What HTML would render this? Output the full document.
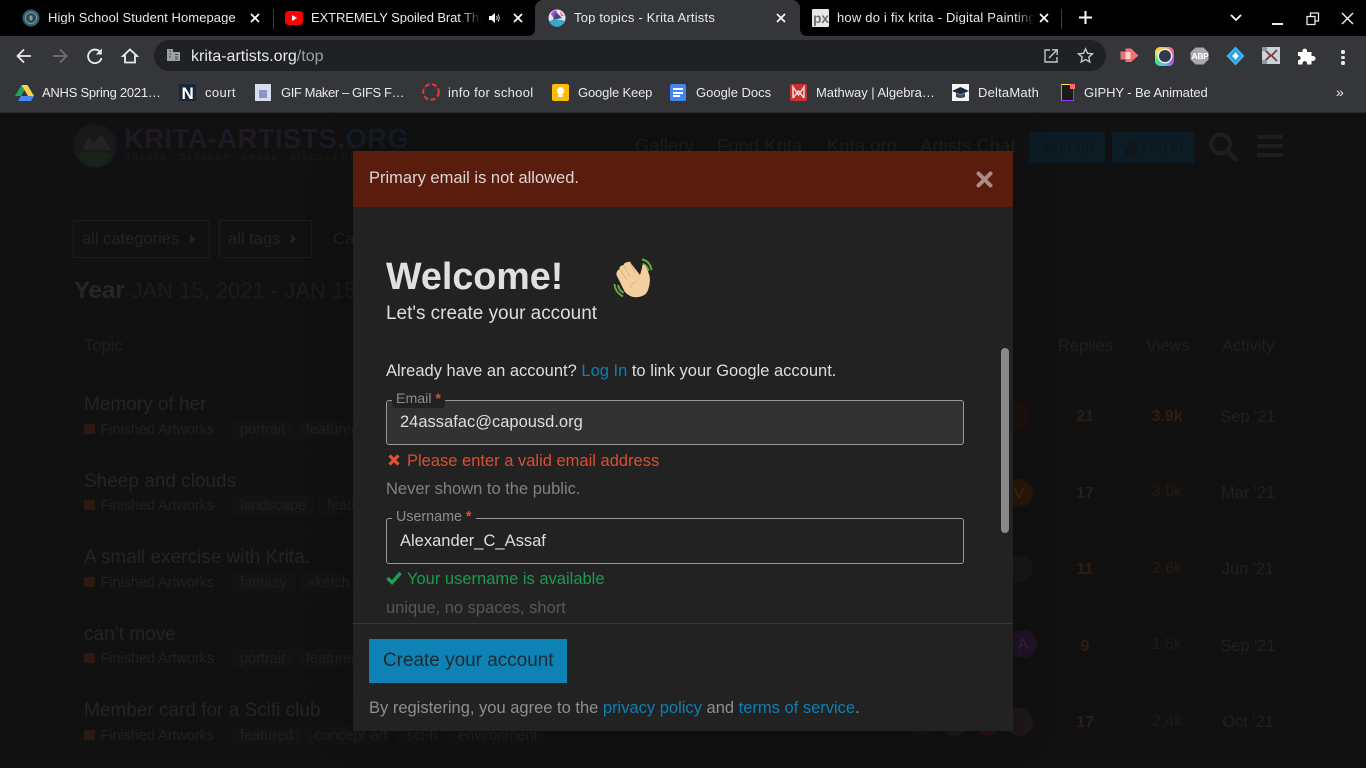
<!DOCTYPE html>
<html><head><meta charset="utf-8"><title>Top topics - Krita Artists</title>
<style>
html,body{margin:0;padding:0;width:1366px;height:768px;overflow:hidden;background:#111;font-family:"Liberation Sans",sans-serif}
.t{position:absolute;white-space:nowrap;line-height:1}
.b{position:absolute}
svg{position:absolute;overflow:visible}
.tab{font-size:13px;color:#e8eaed;top:10.5px;overflow:hidden}
.bm{font-size:13px;color:#e8eaed;top:86px}
.ti{font-size:19px;color:#242424;left:84px}
.cat{font-size:14.4px;color:#212121;left:100.5px}
.sq{position:absolute;left:84px;width:11px;height:10px;background:#2c1912}
.tag{font-size:14.5px;color:#202020}
.tb{position:absolute;height:19px;background:#131313}
.n{font-size:16px;font-weight:bold;color:#2f1d11;text-align:center;width:60px;left:1055px}
.v{font-size:16px;color:#261b13;text-align:center;width:60px;left:1137px}
.a{font-size:16.4px;color:#202020;text-align:center;width:80px;left:1208px}
.ln{position:absolute;left:73px;width:1220px;height:1px;background:#141414}
.av{position:absolute;border-radius:50%;width:28px;height:28px}
</style></head><body>

<!-- page behind -->
<div class="b" style="left:0;top:112px;width:1366px;height:656px;background:#111"></div>
<div class="b" style="left:0;top:112px;width:1366px;height:1px;background:#2a2a2a"></div>

<svg style="left:73px;top:124px" width="44" height="44" viewBox="0 0 44 44">
<circle cx="22" cy="22" r="21" fill="#191919" stroke="#181626" stroke-width="2"/>
<path d="M4 30Q22 24 40 30Q36 42 22 43Q8 42 4 30Z" fill="#182218"/>
<path d="M10 26L16 12L20 20L28 10L38 26Z" fill="#232323"/>
</svg>
<div class="t" style="left:124px;top:125px;font-size:27.6px;font-weight:bold;color:#1f1825;letter-spacing:.3px">KRITA-ARTISTS.<span style="color:#141c25">ORG</span></div>
<div class="t" style="left:125px;top:154px;font-size:8px;font-weight:bold;color:#1a1a1a;letter-spacing:1.75px">CREATE . DEVELOP . SHARE . DISCUSS KRITA</div>

<div class="t" style="left:635px;top:137px;font-size:18.5px;color:#1f1f1f">Gallery</div>
<div class="t" style="left:717px;top:137px;font-size:18.5px;color:#1f1f1f">Fund Krita</div>
<div class="t" style="left:827px;top:137px;font-size:18.5px;color:#1f1f1f">Krita.org</div>
<div class="t" style="left:920px;top:137px;font-size:18.5px;color:#1f1f1f">Artists Chat</div>
<div class="b" style="left:1029px;top:132px;width:76px;height:31px;background:#0c1c24"></div>
<div class="t" style="left:1042px;top:140px;font-size:14.5px;color:#0f1518">Sign Up</div>
<div class="b" style="left:1112px;top:132px;width:82px;height:31px;background:#0c1c24"></div>
<svg style="left:1125px;top:140px" width="13" height="15" viewBox="0 0 13 15"><circle cx="6.5" cy="4" r="3.8" fill="#0f1518"/><path d="M0 15V11Q0 8.300 3 8.300H10Q13 8.300 13 11V15Z" fill="#0f1518"/></svg>
<div class="t" style="left:1142.5px;top:140px;font-size:14.5px;color:#0f1518">Log In</div>
<svg style="left:1208px;top:132px" width="30" height="30" viewBox="0 0 30 30"><circle cx="12.500" cy="12" r="9.500" fill="none" stroke="#1e1e1e" stroke-width="4"/><path d="M19 19L27 27" stroke="#1e1e1e" stroke-width="5" stroke-linecap="round"/></svg>
<div class="b" style="left:1257px;top:135px;width:26px;height:4px;background:#1e1e1e"></div>
<div class="b" style="left:1257px;top:144px;width:26px;height:4px;background:#1e1e1e"></div>
<div class="b" style="left:1257px;top:153px;width:26px;height:4px;background:#1e1e1e"></div>

<div class="b" style="left:73px;top:220px;width:135px;height:36px;border:1px solid #1c1c1c"></div>
<div class="t" style="left:82px;top:231px;font-size:16.5px;color:#232323">all categories</div>
<svg style="left:190px;top:234px" width="6" height="10"><path d="M0 0L5 5L0 10Z" fill="#232323"/></svg>
<div class="b" style="left:219px;top:220px;width:91px;height:36px;border:1px solid #1c1c1c"></div>
<div class="t" style="left:228px;top:231px;font-size:16.5px;color:#232323">all tags</div>
<svg style="left:290.500px;top:234px" width="6" height="10"><path d="M0 0L5 5L0 10Z" fill="#232323"/></svg>
<div class="t" style="left:333px;top:230px;font-size:17px;color:#212121">Ca</div>
<div class="t" style="left:74px;top:279px;font-size:24px;font-weight:bold;color:#262626">Year</div>
<div class="t" style="left:131.500px;top:280px;font-size:22px;color:#1c1c1c">JAN 15, 2021 - JAN 15</div>
<div class="t" style="left:84px;top:338px;font-size:16.5px;color:#1f1f1f">Topic</div>
<div class="t" style="left:1058px;top:338px;font-size:16.5px;color:#1f1f1f">Replies</div>
<div class="t" style="left:1146px;top:338px;font-size:16.5px;color:#1f1f1f">Views</div>
<div class="t" style="left:1222px;top:338px;font-size:16.5px;color:#1f1f1f">Activity</div>

<div class="ln" style="top:453px"></div><div class="ln" style="top:530px"></div><div class="ln" style="top:607px"></div><div class="ln" style="top:684px"></div><div class="ln" style="top:760px"></div>

<div class="t ti" style="top:395px">Memory of her</div>
<div class="sq" style="top:424px"></div><div class="t cat" style="top:423px">Finished Artworks</div>
<div class="tb" style="left:232px;top:420px;width:62px"></div><div class="t tag" style="left:240px;top:423px">portrait</div>
<div class="tb" style="left:298px;top:420px;width:60px"></div><div class="t tag" style="left:306px;top:423px">featured</div>

<div class="t ti" style="top:472px">Sheep and clouds</div>
<div class="sq" style="top:500px"></div><div class="t cat" style="top:499px">Finished Artworks</div>
<div class="tb" style="left:232px;top:496px;width:83px"></div><div class="t tag" style="left:240px;top:499px">landscape</div>
<div class="tb" style="left:319px;top:496px;width:40px"></div><div class="t tag" style="left:327px;top:499px">featured</div>

<div class="t ti" style="top:548px">A small exercise with Krita.</div>
<div class="sq" style="top:577px"></div><div class="t cat" style="top:576px">Finished Artworks</div>
<div class="tb" style="left:232px;top:573px;width:64px"></div><div class="t tag" style="left:240px;top:576px">fantasy</div>
<div class="tb" style="left:300px;top:573px;width:58px"></div><div class="t tag" style="left:308px;top:576px">sketch</div>

<div class="t ti" style="top:625px">can’t move</div>
<div class="sq" style="top:653px"></div><div class="t cat" style="top:652px">Finished Artworks</div>
<div class="tb" style="left:232px;top:649px;width:62px"></div><div class="t tag" style="left:240px;top:652px">portrait</div>
<div class="tb" style="left:298px;top:649px;width:60px"></div><div class="t tag" style="left:306px;top:652px">featured</div>

<div class="t ti" style="top:701px">Member card for a Scifi club</div>
<div class="sq" style="top:730px"></div><div class="t cat" style="top:729px">Finished Artworks</div>
<div class="tb" style="left:232px;top:726px;width:70px"></div><div class="t tag" style="left:240px;top:729px">featured</div>
<div class="tb" style="left:306px;top:726px;width:83px"></div><div class="t tag" style="left:315px;top:729px">concept-art</div>
<div class="tb" style="left:396px;top:726px;width:44px"></div><div class="t tag" style="left:407px;top:729px">sci-fi</div>
<div class="tb" style="left:447px;top:726px;width:97px"></div><div class="t tag" style="left:458px;top:729px">environment</div>

<div class="av" style="left:1005px;top:403px;background:#1c120e;width:26px;height:26px"></div>
<div class="av" style="left:1005px;top:479px;background:#281709"></div>
<div class="t" style="left:1014px;top:486px;font-size:15px;color:#3a2a20">V</div>
<div class="av" style="left:1005px;top:555px;background:#171717"></div>
<div class="av" style="left:1009px;top:630px;background:#20132a"></div>
<div class="t" style="left:1018px;top:637px;font-size:15px;color:#33283a">A</div>
<div class="av" style="left:1005px;top:708px;background:#1e1818"></div>
<div class="av" style="left:910px;top:712px;background:#1a1410;width:24px;height:24px"></div>
<div class="av" style="left:942px;top:712px;background:#191919;width:24px;height:24px"></div>
<div class="av" style="left:974px;top:708px;background:#2a1014"></div>

<div class="t n" style="top:409px">21</div><div class="t v" style="top:409px;font-weight:bold;color:#2f1d11">3.9k</div><div class="t a" style="top:409px">Sep '21</div>
<div class="t n" style="top:486px">17</div><div class="t v" style="top:484px">3.0k</div><div class="t a" style="top:485px">Mar '21</div>
<div class="t n" style="top:562px">11</div><div class="t v" style="top:561px">2.6k</div><div class="t a" style="top:561px">Jun '21</div>
<div class="t n" style="top:639px">9</div><div class="t v" style="top:637px;color:#1c1c1c">1.5k</div><div class="t a" style="top:638px">Sep '21</div>
<div class="t n" style="top:715px">17</div><div class="t v" style="top:714px">2.4k</div><div class="t a" style="top:714px">Oct '21</div>

<!-- modal -->
<div class="b" style="left:353px;top:151px;width:660px;height:580px;background:#222;box-shadow:0 0 40px rgba(0,0,0,.25)"></div>
<div class="b" style="left:353px;top:151px;width:660px;height:56px;background:#5a1d0d"></div>
<div class="t" style="left:369px;top:170px;font-size:16.5px;color:#dcd6d4">Primary email is not allowed.</div>
<svg style="left:976px;top:171px" width="17" height="17" viewBox="0 0 17 17"><path d="M2.500 2.500L14.500 14.500M14.500 2.500L2.500 14.500" stroke="#ac8b85" stroke-width="4" stroke-linecap="round"/></svg>

<div class="t" style="left:386px;top:257.500px;font-size:37.700px;font-weight:bold;color:#e0e0e0">Welcome!</div>
<svg style="left:613px;top:258px" width="42" height="42" viewBox="0 0 42 42">
<g fill="none" stroke="#68a744" stroke-width="2">
<path d="M29 1.500Q37 3 38.500 12"/><path d="M29.500 6Q34 7 35.500 13"/>
<path d="M1.500 26Q2 34 10 38.500"/><path d="M5 27Q6 32 10.500 35"/>
</g>
<path d="M16.700 3.700Q11 4 10.500 7Q6 8 6.500 11Q3 13 3.500 17L11.700 33.700Q17 39.500 23.300 39.300Q33 38.500 35 32Q37.500 25 36.700 18.700Q35 12 31.700 7Q29 6 29 10L27 17Z" fill="#f3cfa0"/>
<g fill="none" stroke="#dfb285" stroke-width="1"><path d="M10.500 7L17 19"/><path d="M6.500 11L14 22"/><path d="M16.700 3.700L22 15"/><path d="M17 30Q19 24 24 24"/></g>
</svg>
<div class="t" style="left:386px;top:305px;font-size:18.950px;color:#dedede">Let's create your account</div>
<div class="t" style="left:386px;top:363px;font-size:16.500px;color:#dedede">Already have an account? <span style="color:#0d7fb0">Log In</span> to link your Google account.</div>

<div class="b" style="left:386px;top:400px;width:576px;height:43px;background:#323232;border:1px solid #999;border-radius:3px"></div>
<div class="b" style="left:392px;top:390px;width:53px;height:18px;background:#222;border-radius:3px"></div>
<div class="t" style="left:396px;top:392px;font-size:14.200px;color:#8c8c8c">Email <b style="color:#d9502f">*</b></div>
<div class="t" style="left:400px;top:413.500px;font-size:16.500px;color:#dedede">24assafac@capousd.org</div>
<svg style="left:388px;top:454px" width="12" height="12" viewBox="0 0 12 12"><path d="M1.500 1.500L10.500 10.500M10.500 1.500L1.500 10.500" stroke="#e0532f" stroke-width="3.200"/></svg>
<div class="t" style="left:407px;top:452.500px;font-size:16.500px;color:#d9502f">Please enter a valid email address</div>
<div class="t" style="left:386px;top:480.500px;font-size:16.500px;color:#808080">Never shown to the public.</div>

<div class="b" style="left:386px;top:518px;width:576px;height:44px;background:#222;border:1px solid #999;border-radius:3px"></div>
<div class="b" style="left:392px;top:508px;width:84px;height:18px;background:#222"></div>
<div class="t" style="left:396px;top:510px;font-size:14.300px;color:#8c8c8c">Username <b style="color:#d9502f">*</b></div>
<div class="t" style="left:400px;top:533px;font-size:16.500px;color:#dedede">Alexander_C_Assaf</div>
<svg style="left:386px;top:571px" width="16" height="14" viewBox="0 0 16 14"><path d="M1.500 7L6 11.500L14.500 2" stroke="#1e9e50" stroke-width="3.400" fill="none"/></svg>
<div class="t" style="left:407px;top:570.500px;font-size:16.500px;color:#1a9a4e">Your username is available</div>
<div class="t" style="left:386px;top:598.500px;font-size:16.500px;height:24px;color:#575757;overflow:hidden;line-height:18px">unique, no spaces, short</div>
<div class="b" style="left:1001px;top:348px;width:8px;height:185px;background:#8a8a8a;border-radius:4px"></div>

<div class="b" style="left:353px;top:623px;width:660px;height:108px;background:#222;border-top:1px solid #373737;box-sizing:border-box"></div>
<div class="b" style="left:369px;top:639px;width:198px;height:44px;background:#0e82b4"></div>
<div class="t" style="left:383px;top:651.500px;font-size:18.950px;color:#1d2a33">Create your account</div>
<div class="t" style="left:369px;top:699.500px;font-size:16.500px;color:#8f8f8f">By registering, you agree to the <span style="color:#0d7fb0">privacy policy</span> and <span style="color:#0d7fb0">terms of service</span>.</div>

<!-- chrome -->
<div class="b" style="left:0;top:0;width:1366px;height:36px;background:#000"></div>
<div class="b" style="left:0;top:36px;width:1366px;height:76px;background:#35363a"></div>
<div class="b" style="left:535px;top:0;width:265px;height:36px;background:#35363a;border-radius:8px 8px 0 0"></div>
<svg style="left:527px;top:28px" width="8" height="8"><path d="M0 8Q8 8 8 0V8Z" fill="#35363a"/></svg>
<svg style="left:800px;top:28px" width="8" height="8"><path d="M8 8Q0 8 0 0V8Z" fill="#35363a"/></svg>
<div class="b" style="left:273px;top:9px;width:1px;height:20px;background:#3c3c3c"></div>
<div class="b" style="left:1061px;top:9px;width:1px;height:20px;background:#3c3c3c"></div>

<svg style="left:22px;top:9px" width="18" height="18" viewBox="0 0 18 18"><circle cx="9" cy="9" r="8.500" fill="#2f5f73"/><circle cx="9" cy="9" r="5.500" fill="#27465e" stroke="#8ba088" stroke-width="1"/><rect x="7.500" y="6.500" width="3" height="5" fill="#8a9a88"/></svg>
<div class="t tab" style="left:48px;width:192px;letter-spacing:.07px">High School Student Homepage</div>
<svg style="left:250px;top:13px" width="10" height="10"><path d="M1 1L9 9M9 1L1 9" stroke="#fff" stroke-width="1.700"/></svg>

<svg style="left:285px;top:10px" width="18" height="17" viewBox="0 0 18 17"><rect y="1" width="18" height="14" rx="3.500" fill="#f00"/><path d="M7 5L12 8L7 11Z" fill="#fff"/></svg>
<div class="t tab" style="left:311px;width:170px;letter-spacing:-.1px">EXTREMELY Spoiled Brat Thi</div>
<div class="b" style="left:461px;top:8px;width:20px;height:20px;background:linear-gradient(90deg,rgba(0,0,0,0),#000)"></div>
<svg style="left:488px;top:12px" width="13" height="12" viewBox="0 0 13 12"><path d="M1 4H3.500L7 1V11L3.500 8H1Z" fill="#fff"/><path d="M8.500 4Q10 6 8.500 8M10 2.500Q12.500 6 10 9.500" stroke="#ddd" stroke-width="1" fill="none"/></svg>
<svg style="left:513px;top:13px" width="10" height="10"><path d="M1 1L9 9M9 1L1 9" stroke="#fff" stroke-width="1.700"/></svg>

<svg style="left:548px;top:9px" width="18" height="18" viewBox="0 0 18 18"><circle cx="9" cy="9" r="8.500" fill="#e6e0f4"/><path d="M1 12Q9 9 17 12Q14 18 9 18Q4 18 1 12Z" fill="#3aa6c9"/><path d="M3 5Q6 0 9 2L6 10Z" fill="#9a52c8"/><path d="M8 3L14 9L5 11Z" fill="#444a76"/><path d="M12 2L16 7L13 7Z" fill="#e76aa8"/></svg>
<div class="t tab" style="left:574px;width:200px;letter-spacing:.2px">Top topics - Krita Artists</div>
<svg style="left:776px;top:13px" width="10" height="10"><path d="M1 1L9 9M9 1L1 9" stroke="#fff" stroke-width="1.700"/></svg>

<div class="b" style="left:812px;top:9px;width:17px;height:18px;background:#e8e8e8;border-radius:1px"></div>
<div class="t" style="left:813px;top:11px;font-size:14px;font-weight:bold;color:#707070;letter-spacing:-.3px">px</div>
<div class="t tab" style="left:837px;width:197px;letter-spacing:.2px">how do i fix krita - Digital Painting</div>
<div class="b" style="left:1014px;top:8px;width:21px;height:20px;background:linear-gradient(90deg,rgba(0,0,0,0),#000)"></div>
<svg style="left:1039px;top:13px" width="10" height="10"><path d="M1 1L9 9M9 1L1 9" stroke="#fff" stroke-width="1.700"/></svg>
<svg style="left:1078px;top:10px" width="15" height="15"><path d="M7.500 1V14M1 7.500H14" stroke="#fff" stroke-width="2"/></svg>
<svg style="left:1230px;top:14px" width="12" height="8"><path d="M1 1L6 6L11 1" stroke="#fff" stroke-width="1.800" fill="none"/></svg>
<div class="b" style="left:1272px;top:23px;width:11px;height:2px;background:#e8eaed"></div>
<svg style="left:1306px;top:12px" width="14" height="14"><path d="M4.500 4V1H12.500V9H9.500M1 4.500H9V12.500H1Z" stroke="#e8eaed" stroke-width="1.300" fill="none"/></svg>
<svg style="left:1341px;top:12px" width="13" height="13"><path d="M1 1L12 12M12 1L1 12" stroke="#e8eaed" stroke-width="1.500"/></svg>

<!-- toolbar -->
<svg style="left:15px;top:47px" width="18" height="18" viewBox="0 0 18 18"><path d="M16 9H3M9 2.500L2.500 9L9 15.500" stroke="#e8eaed" stroke-width="1.800" fill="none"/></svg>
<svg style="left:51px;top:47px" width="18" height="18" viewBox="0 0 18 18"><path d="M2 9H15M9 2.500L15.500 9L9 15.500" stroke="#6f7073" stroke-width="1.800" fill="none"/></svg>
<svg style="left:86px;top:47px" width="18" height="18" viewBox="0 0 18 18"><path d="M14.500 5.500A6.800 6.800 0 1 0 15.500 11" stroke="#e8eaed" stroke-width="1.800" fill="none"/><path d="M15.800 1.500V7.500H9.800Z" fill="#e8eaed"/></svg>
<svg style="left:121px;top:47px" width="18" height="18" viewBox="0 0 18 18"><path d="M2 9L9 2.500L16 9H14V15.500H4V9Z" stroke="#e8eaed" stroke-width="1.800" fill="none" stroke-linejoin="miter"/></svg>

<div class="b" style="left:154px;top:40px;width:952px;height:31px;background:#202124;border-radius:16px"></div>
<svg style="left:166px;top:48px" width="15" height="14" viewBox="0 0 15 14"><path d="M1 1H7V4H14V13H1Z" fill="#9aa0a6"/><path d="M3 3H5M3 6H5M3 9H5M9 6.500H12M9 9H12M9 11H12" stroke="#4b4c4f" stroke-width="1"/></svg>
<div class="t" style="left:191px;top:49px;font-size:16px;color:#e8eaed">krita-artists.org<span style="color:#9aa0a6">/top</span></div>
<svg style="left:1043px;top:48px" width="16" height="16" viewBox="0 0 16 16"><path d="M7 2H2V14H14V9" stroke="#c4c7c9" stroke-width="1.400" fill="none"/><path d="M6 10L14 2M9 1.800H14.200V7" stroke="#c4c7c9" stroke-width="1.400" fill="none"/></svg>
<svg style="left:1077px;top:47px" width="17" height="17" viewBox="0 0 17 17"><path d="M8.500 1.800L10.500 6.300L15.500 6.800L11.800 10.100L12.800 15L8.500 12.500L4.200 15L5.200 10.100L1.500 6.800L6.500 6.300Z" stroke="#c4c7c9" stroke-width="1.400" fill="none"/></svg>

<svg style="left:1120px;top:47px" width="19" height="17" viewBox="0 0 19 17"><path d="M.5 4.500H5.500V1.500H11L18.500 8.500L11 15H5.500V12.500H.5Z" fill="#ef7272"/><rect x="5.500" y="5" width="5" height="7" fill="#ffd0d0"/></svg>
<div class="b" style="left:1155px;top:46.500px;width:19px;height:19px;border-radius:5px;background:conic-gradient(#f5b53d,#ef5da8,#b44fd8,#4fc3f7,#4be08a,#f5e14d,#f5b53d)"></div>
<div class="b" style="left:1158.500px;top:50px;width:12px;height:12px;border-radius:50%;background:#2f3a4a;box-shadow:0 0 0 1.500px #e8eef5"></div>
<svg style="left:1190px;top:47px" width="19" height="18" viewBox="0 0 19 18"><path d="M5.500 .5H13.500L18.500 5.500V12.500L13.500 17.500H5.500L.5 12.500V5.500Z" fill="#a9a9a9"/></svg>
<div class="t" style="left:1191.500px;top:52px;font-size:8.500px;font-weight:bold;color:#fff;letter-spacing:-.3px">ABP</div>
<svg style="left:1226px;top:46px" width="19" height="20" viewBox="0 0 19 20"><path d="M9.500 .5L18.500 10L9.500 19.500L.5 10Z" fill="#39b4f0"/><path d="M9.500 4L15 10L9.500 16L4 10Z" fill="#1c86c9"/><path d="M9.500 5.500L13.500 10L9.500 14.500L5.500 10Z" fill="#9fe2ff"/><circle cx="9.500" cy="10" r="1.800" fill="#fff"/></svg>
<div class="b" style="left:1262px;top:47px;width:18px;height:17px;background:#c9d2d6"></div>
<svg style="left:1262px;top:47px" width="18" height="17"><path d="M3 3L8.500 8.500L3 14M15 3L9.500 8.500L15 14" stroke="#7a3a3a" stroke-width="1.800" fill="none"/><path d="M0 0H5V4H0ZM0 13H5V17H0Z" fill="#8a9aa0"/></svg>
<svg style="left:1297px;top:47px" width="18" height="18" viewBox="0 0 18 18"><path d="M1 5H5.500V3.500A2.300 2.300 0 0 1 10 3.500V5H14.500V9H16A2.300 2.300 0 0 1 16 14H14.500V17.500H10V16A2.300 2.300 0 0 0 5.500 16V17.500H1V13H2.500A2.300 2.300 0 0 0 2.500 9H1Z" fill="#fff"/></svg>
<div class="b" style="left:1341px;top:50px;width:3.500px;height:3.500px;border-radius:50%;background:#e8eaed"></div>
<div class="b" style="left:1341px;top:55.500px;width:3.500px;height:3.500px;border-radius:50%;background:#e8eaed"></div>
<div class="b" style="left:1341px;top:61px;width:3.500px;height:3.500px;border-radius:50%;background:#e8eaed"></div>

<!-- bookmarks -->
<svg style="left:15px;top:84px" width="19" height="17" viewBox="0 0 19 17"><path d="M6.500 1H12.500L6 12H0Z" fill="#1fa463"/><path d="M12.500 1L19 12H13L6.500 1Z" fill="#ffd04b"/><path d="M3 17L6 12H19L16 17Z" fill="#4688f4"/></svg>
<div class="t bm" style="left:42px;letter-spacing:-.25px">ANHS Spring 2021…</div>
<div class="b" style="left:179px;top:84px;width:17px;height:17px;background:#17283c"></div>
<div class="t" style="left:181.500px;top:84.500px;font-size:17px;font-weight:bold;color:#fff">N</div>
<div class="t bm" style="left:205px;letter-spacing:.4px">court</div>
<div class="b" style="left:255px;top:84px;width:16px;height:17px;background:#d9dcec"></div>
<div class="b" style="left:259px;top:90px;width:8px;height:8px;background:#8f93c8"></div>
<div class="t bm" style="left:281px;letter-spacing:-.4px">GIF Maker – GIFS F…</div>
<svg style="left:422px;top:83px" width="18" height="18"><circle cx="9" cy="9" r="7.800" fill="none" stroke="#e03a3a" stroke-width="2" stroke-dasharray="5 2.500"/></svg>
<div class="t bm" style="left:448px;letter-spacing:.3px">info for school</div>
<div class="b" style="left:552px;top:84px;width:17px;height:17px;background:#fbbc05;border-radius:2px"></div>
<div class="b" style="left:557px;top:87px;width:7px;height:8px;background:#fff;border-radius:50%"></div>
<div class="b" style="left:558px;top:95px;width:5px;height:2px;background:#fff"></div>
<div class="t bm" style="left:578px;letter-spacing:-.15px">Google Keep</div>
<div class="b" style="left:670px;top:84px;width:16px;height:17px;background:#4285f4;border-radius:2px"></div>
<div class="b" style="left:673px;top:88px;width:10px;height:2px;background:#fff"></div>
<div class="b" style="left:673px;top:91.500px;width:10px;height:2px;background:#fff"></div>
<div class="b" style="left:673px;top:95px;width:7px;height:2px;background:#fff"></div>
<div class="t bm" style="left:696px">Google Docs</div>
<div class="b" style="left:790px;top:84px;width:17px;height:17px;background:#c9302f;border-radius:2px"></div>
<svg style="left:790px;top:84px" width="17" height="17"><path d="M3 14V3L8.500 11L14 3V14M3 14L8.500 7L14 14" stroke="#f3d9d9" stroke-width="1.500" fill="none"/></svg>
<div class="t bm" style="left:816px;letter-spacing:-.05px">Mathway | Algebra…</div>
<div class="b" style="left:952px;top:84px;width:17px;height:17px;background:#f5f5f5"></div>
<svg style="left:952px;top:84px" width="17" height="17"><path d="M0 7L8.500 3L17 7L8.500 10.500Z" fill="#1d2a3a"/><path d="M4 9V13Q8.500 15 13 13V9L8.500 11Z" fill="#3b4a5e"/></svg>
<div class="t bm" style="left:978px;letter-spacing:.2px">DeltaMath</div>
<div class="b" style="left:1061px;top:84px;width:13px;height:17px;background:#1a1a1a;border:1.500px solid;border-color:#fff35c #9933ff #9933ff #00e6a0;box-sizing:border-box"></div>
<div class="b" style="left:1070px;top:84px;width:5px;height:5px;background:#ff6666"></div>
<div class="t bm" style="left:1084px;letter-spacing:-.1px">GIPHY - Be Animated</div>
<div class="t" style="left:1336px;top:85px;font-size:14px;color:#e8eaed">»</div>

</body></html>
